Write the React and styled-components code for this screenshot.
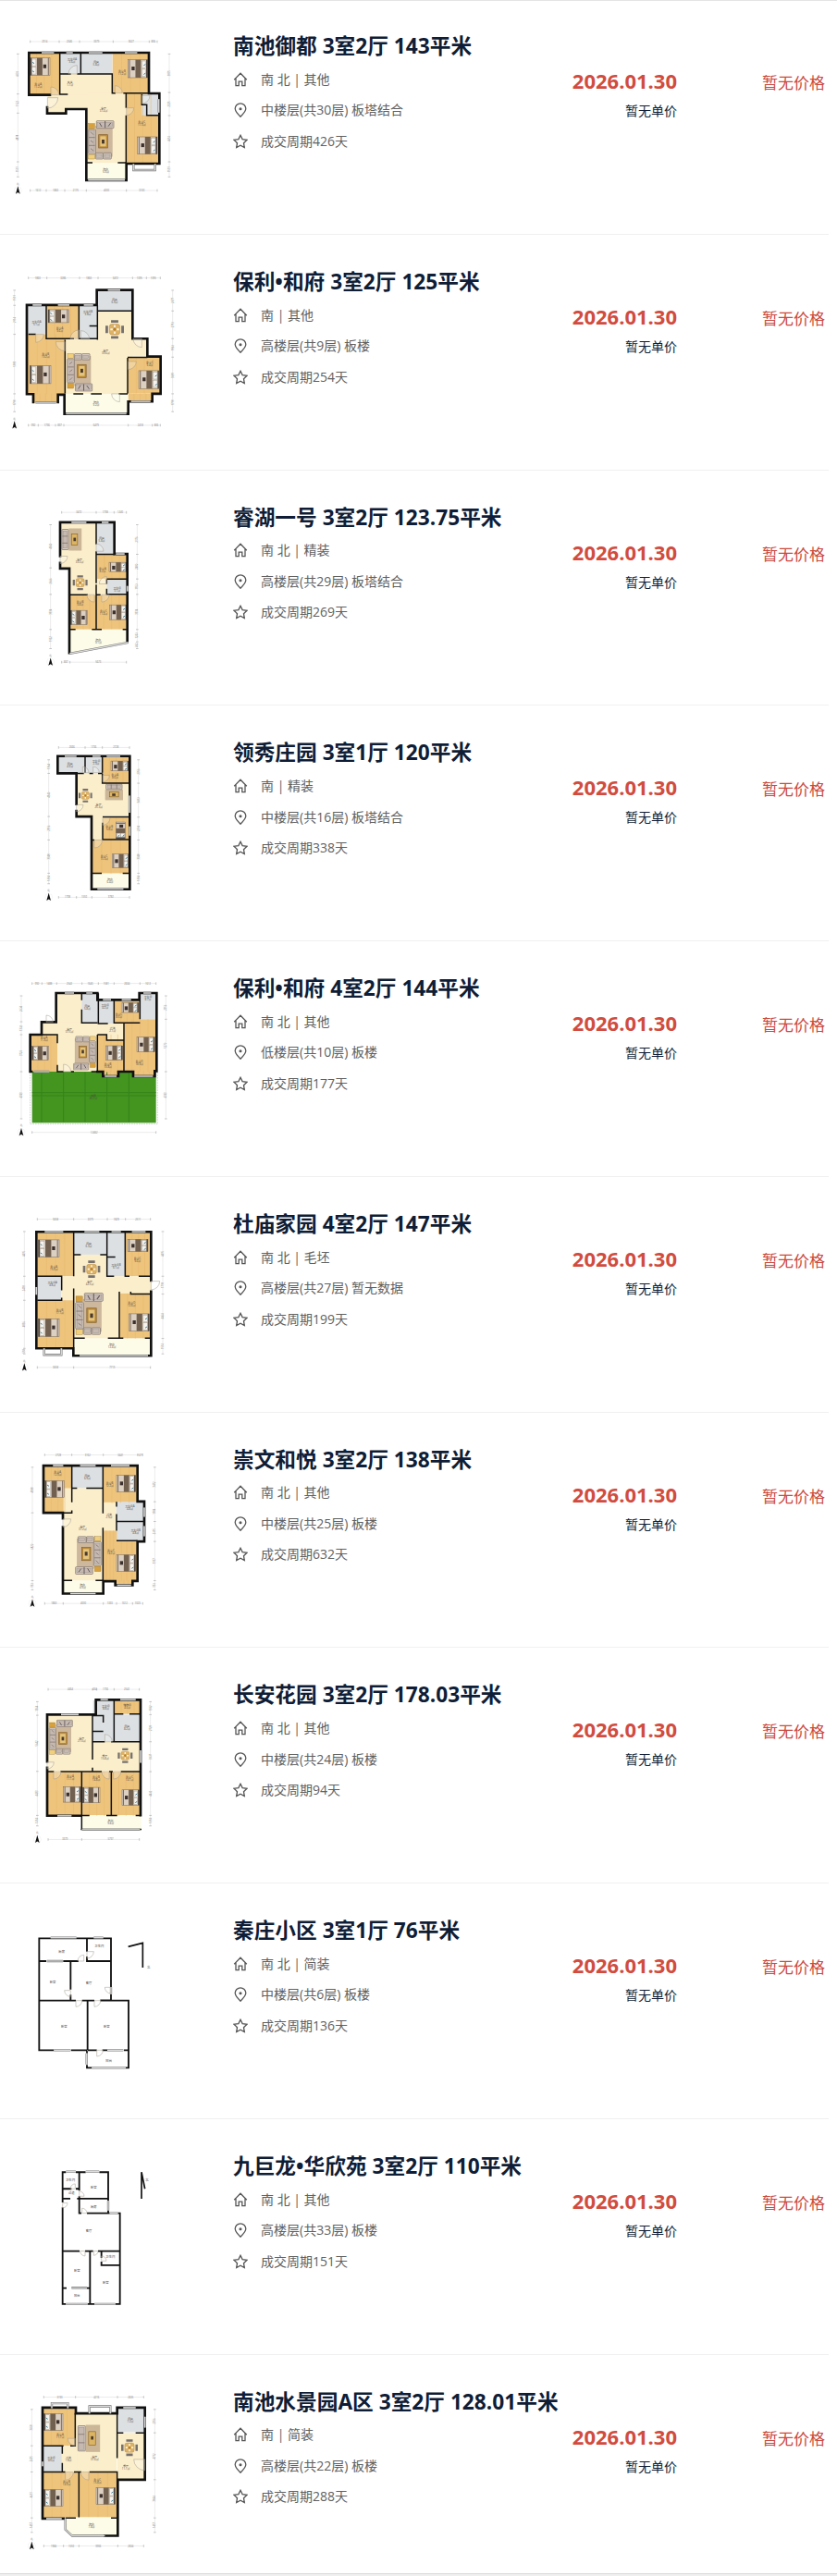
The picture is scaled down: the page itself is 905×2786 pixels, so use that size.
import React from "react"
import styled, { createGlobalStyle } from "styled-components"

const WOOD = "#eec47c"
const TILE = "#fbeecb"
const WET = "#dde0e2"
const BALCONY = "#fdfce8"

// every plan is drawn in units of a third of a pixel
// rooms: [fill, x, y, w, h]   beds: [x, y, w, h, pillow side]
// doors: [x, y, r, sx, sy]    labels: [name, area, x, y]
const plans = {
  yudu: {
    shift: 0,
    rooms: [
      [WOOD, 94, 112, 98, 136], [WET, 194, 112, 68, 68], [WET, 262, 112, 102, 68], [WOOD, 365, 112, 118, 131],
      [TILE, 194, 180, 171, 114], [TILE, 154, 248, 128, 46], [TILE, 154, 290, 61, 18], [TILE, 282, 242, 127, 228],
      [BALCONY, 282, 468, 128, 57], [WOOD, 410, 243, 106, 227], [WET, 460, 246, 56, 68],
    ],
    outer: "M162 248H94V111H483V243H517V471H410V525H280V294H214V308H153V288",
    inner: "M194 112V246H220M194 180H230M262 112V180M250 180H364V242H375M400 242H483M409 242V290M409 314V470M282 468H300M382 468H410M460 246V280H476V314H516",
    windows: "M135 111H175M215 111H236M288 111H332M405 111H445M286 524H405M515 262V305M433 472V492H503V472",
    doors: [[165, 248, 26, 1, -1], [154, 257, 34, 1, 1], [250, 180, 28, -1, -1], [373, 242, 24, 1, -1], [410, 290, 24, 1, 1], [460, 250, 26, 1, 1]],
    beds: [[98, 128, 64, 56, "l"], [415, 134, 64, 58, "r"], [446, 384, 64, 56, "r"]],
    lounges: [[284, 330, 86, 128, 1, 1]],
    labels: [["卧室A", "11.2㎡", 124, 217], ["卫生间A", "3.6㎡", 234, 136], ["厨房", "5.8㎡", 312, 144], ["卧室B", "11.2㎡", 396, 174], ["玄关", "1.7㎡", 227, 210], ["客厅", "37.4㎡", 336, 293], ["卧室C", "17.3㎡", 460, 338], ["阳台", "5.9㎡", 343, 493]],
    dims: [98, 510, 75, 558, 58, 549],
    marks: [[192, 258, 367, 484], [150, 210, 280, 410], [245, 307, 465], [240, 315, 465]],
  },
  poly: {
    shift: 15.75,
    rooms: [
      [WET, 90, 150, 60, 94], [WOOD, 150, 150, 106, 108], [WET, 256, 150, 60, 110], [WET, 316, 100, 112, 68],
      [TILE, 316, 168, 112, 270], [TILE, 212, 260, 204, 178], [TILE, 416, 258, 62, 58], [WOOD, 90, 244, 122, 194],
      [WOOD, 110, 436, 76, 30], [WOOD, 415, 318, 106, 118], [WOOD, 415, 436, 78, 26], [BALCONY, 210, 438, 206, 64],
    ],
    outer: "M108 464V438H87V149H314V100H430V258H478V316H521V437H494V462H416V502H209V440H188V464",
    inner: "M150 150V258H240M92 244H116M256 150V258H316M290 217H316M316 150V262M318 168H428M211 262V436M414 320V436M414 319H478M238 437H270M295 437H330M385 437H414",
    windows: "M106 149H135M188 149H225M272 149H302M350 100H390M115 465H182M425 462H488M214 501H410",
    doors: [[116, 244, 26, 1, 1], [211, 268, 30, -1, 1], [256, 258, 28, -1, -1], [262, 260, 28, 1, -1], [460, 258, 28, -1, 1], [416, 332, 26, 1, 1], [388, 437, 26, -1, 1]],
    beds: [[97, 346, 68, 58, "l"], [156, 164, 68, 42, "l"], [450, 362, 66, 58, "r"]],
    lounges: [[216, 305, 84, 125, 1, -1]],
    tables: [[372, 228, 30]],
    labels: [["卫生间A", "5.1㎡", 118, 207], ["卧室A", "9.6㎡", 194, 228], ["卫生间B", "3.8㎡", 285, 174], ["厨房", "6.9㎡", 372, 134], ["卧室B", "19.2㎡", 148, 311], ["客厅", "39.6㎡", 343, 300], ["卧室C", "9.4㎡", 486, 338], ["阳台", "9.2㎡", 312, 467]],
    dims: [92, 520, 61, 539, 47, 560],
    marks: [[152, 258, 318, 430, 475], [124, 180, 207, 416, 494], [150, 244, 437], [168, 258, 318, 437]],
  },
  ruihu: {
    shift: 16.5,
    rooms: [
      [TILE, 196, 90, 116, 148], [TILE, 226, 236, 86, 88], [WET, 312, 90, 60, 102], [WOOD, 314, 192, 98, 80],
      [TILE, 312, 272, 36, 52], [WET, 346, 272, 66, 50], [WOOD, 228, 324, 84, 112], [WOOD, 312, 324, 100, 112],
    ],
    floor: "M228 436H414V476L228 512Z",
    outer: "M195 198V88H371V191H413V476M195 220V238H225V512",
    inner: "M312 90V160M312 182V286M314 192H372M346 272H413M346 272V288M346 304V322H414M228 323H285M310 323H326M312 290V436M228 436H245M298 436H330M398 436H414",
    windows: "M232 88H280M330 88H352M376 191H404M413 295V312M226 514L416 478",
    doors: [[195, 198, 24, 1, 1], [312, 182, 24, 1, -1], [346, 288, 24, -1, -1], [306, 323, 24, -1, 1], [330, 323, 24, 1, 1]],
    beds: [[228, 374, 56, 46, "l"], [356, 356, 56, 48, "r"], [354, 218, 58, 30, "r"]],
    couches: [[200, 108, 66, 72, 0]],
    tables: [[260, 284, 24]],
    labels: [["客厅", "33.3㎡", 258, 212], ["厨房", "5.8㎡", 330, 141], ["卧室A", "8.2㎡", 333, 240], ["卫生间", "3.1㎡", 380, 303], ["卧室B", "9.8㎡", 260, 348], ["卧室C", "11.4㎡", 336, 378], ["阳台", "9.1㎡", 319, 472]],
    dims: [200, 410, 56, 542, 164, 445],
    marks: [[312, 370], [227], [236, 322, 436], [192, 272, 322, 436, 476]],
  },
  lingxiu: {
    shift: 17.25,
    rooms: [
      [WET, 189, 85, 88, 54], [WET, 278, 85, 54, 54], [WOOD, 333, 85, 88, 88], [TILE, 250, 139, 84, 138],
      [TILE, 333, 172, 88, 106], [TILE, 300, 276, 34, 80], [WOOD, 333, 282, 88, 72], [WOOD, 299, 356, 122, 110], [BALCONY, 299, 464, 122, 52],
    ],
    outer: "M248 240V140H187V84H421V516H297V280H248V262",
    inner: "M276 86V138M250 140H272M290 140H302M332 86V138M318 140H332M332 140V172H420M333 281H421M333 300V355H420M299 356H306M299 464H330M398 464H420",
    windows: "M210 84H248M300 84H326M346 84H390M420 212V268M421 312V342M316 515H400",
    doors: [[248, 242, 22, 1, 1], [302, 138, 20, 1, -1], [333, 146, 22, 1, 1], [333, 284, 24, 1, 1], [306, 356, 26, 1, 1], [268, 138, 20, 1, -1]],
    beds: [[364, 402, 56, 44, "r"], [360, 100, 58, 32, "r"], [376, 298, 30, 54, "b"]],
    couches: [[345, 174, 54, 58, 90]],
    tables: [[277, 212, 22]],
    labels: [["厨房", "4.9㎡", 227, 112], ["卫生间", "2.9㎡", 312, 104], ["卧室A", "8.6㎡", 373, 149], ["客厅", "25.3㎡", 320, 245], ["卧室B", "6.8㎡", 355, 316], ["卧室C", "13.3㎡", 338, 412], ["阳台", "6.4㎡", 357, 487]],
    dims: [190, 420, 56, 542, 158, 449],
    marks: [[276, 332], [248, 298], [140, 280, 356, 464], [172, 282, 356, 464]],
  },
  polyGarden: {
    shift: 18,
    rooms: [
      ["#43951f", 104, 342, 402, 166],
      [TILE, 186, 88, 80, 254], [TILE, 138, 182, 266, 40], [TILE, 186, 184, 130, 158], [WET, 265, 88, 54, 96],
      [WET, 319, 110, 52, 76], [WOOD, 370, 110, 84, 76], [WET, 454, 88, 52, 84], [WOOD, 402, 172, 104, 170], [WOOD, 430, 340, 72, 18],
      [WOOD, 316, 222, 88, 120], [WOOD, 334, 340, 50, 18], [TILE, 346, 186, 56, 54], [WOOD, 102, 222, 84, 120],
    ],
    outer: "M102 342H98V222H135V181H182V87H316V109H452V87H508V340H502V357H432V342H384V357H334V342H316",
    inner: "M265 88V110M265 140V184H316M319 88V186H350M370 110V184H454M454 90V172M402 184V342M346 220V240H402M316 222H346M316 222V342M138 222H186V250M186 320V342H206M230 342H240M296 342H316",
    windows: "M210 87H240M280 87H300M334 109H360M395 109H425M465 87H490M110 342H160M340 357H378M436 357H496",
    grid: "M135 344V506M206 344V506M276 344V506M347 344V506M418 344V506M104 410H506M104 420H506",
    doors: [[150, 181, 22, 1, -1], [206, 342, 24, 1, -1]],
    beds: [[104, 260, 54, 44, "l"], [344, 258, 54, 46, "r"], [396, 118, 54, 32, "r"], [444, 230, 58, 48, "r"]],
    lounges: [[238, 226, 74, 112, -1, -1]],
    labels: [["厨房", "5.8㎡", 283, 132], ["卫生间", "4.2㎡", 341, 130], ["卧室C", "8.5㎡", 386, 160], ["卫生间", "4.7㎡", 480, 103], ["客厅", "37.5㎡", 225, 206], ["过道", "2.1㎡", 365, 204], ["卧室A", "11.3㎡", 143, 235], ["卧室B", "10.8㎡", 350, 320], ["卧室D", "18.9㎡", 452, 312], ["花园", "86.1㎡", 303, 423]],
    dims: [104, 506, 56, 539, 69, 538],
    marks: [[136, 184, 266, 319, 370, 454], [], [180, 222, 342], [172, 342]],
  },
  dumiao: {
    shift: 18.75,
    rooms: [
      [WOOD, 121, 98, 118, 142], [WET, 240, 98, 108, 72], [WET, 348, 98, 58, 142], [WOOD, 408, 98, 82, 142],
      [TILE, 200, 240, 290, 58], [TILE, 240, 170, 108, 272], [TILE, 340, 290, 48, 152], [WET, 121, 240, 78, 78],
      [TILE, 200, 286, 40, 32], [WOOD, 121, 318, 119, 152], [WOOD, 388, 296, 102, 146], [BALCONY, 240, 442, 250, 56],
    ],
    outer: "M490 254V96H118V474H238V498H490V290",
    inner: "M239 98V240M121 240H200V286M121 318H200V310M239 280V470M240 170H262M325 170H348M347 98V240H370M348 178H374M406 98V240H420M450 240H488M387 290V442M424 290V298H488M240 441H275M350 441H400M470 441H490",
    windows: "M145 96H205M274 96H322M362 96H392M428 96H472M118 275V300M143 474V495H199V474M258 498H480",
    doors: [[490, 256, 28, 1, 1]],
    beds: [[124, 122, 68, 56, "l"], [124, 378, 68, 58, "l"], [418, 362, 66, 56, "r"], [414, 120, 66, 40, "r"]],
    lounges: [[243, 293, 92, 138, 1, 1]],
    tables: [[297, 217, 28]],
    labels: [["卧室A", "15.0㎡", 175, 211], ["厨房", "6.3㎡", 288, 137], ["卫生间B", "6.1㎡", 376, 205], ["卧室C", "9.6㎡", 446, 186], ["卫生间A", "4.8㎡", 170, 264], ["客厅", "42.5㎡", 291, 260], ["卧室B", "17.1㎡", 194, 353], ["卧室D", "12.6㎡", 427, 328], ["阳台", "12.4㎡", 363, 464]],
    dims: [121, 488, 55, 536, 79, 528],
    marks: [[239, 348, 407], [239], [240, 318, 474], [240, 298, 442]],
  },
  chongwen: {
    shift: 19.5,
    rooms: [
      [WOOD, 144, 92, 88, 148], [WET, 234, 92, 100, 70], [WOOD, 335, 92, 112, 118], [TILE, 206, 162, 128, 300],
      [TILE, 333, 208, 44, 94], [WET, 377, 206, 90, 64], [WET, 377, 272, 90, 58], [WOOD, 335, 300, 44, 162],
      [WOOD, 376, 332, 70, 132], [WOOD, 374, 460, 56, 16], [BALCONY, 206, 462, 128, 42],
    ],
    outer: "M204 260V242H141V89H446V205H468V335H446V463H430V477H374V464H335V504H204V288",
    inner: "M233 90V208M233 234V242H206M234 162H250M280 162H334M334 92V244M334 290V462M378 206V222M378 246V300M378 270H466M378 332H446M206 461H234M310 461H334",
    windows: "M172 89H205M260 89H310M360 89H420M468 225V255M468 285V318M228 504H310M380 477H425",
    doors: [[204, 262, 26, 1, 1]],
    beds: [[146, 138, 62, 54, "l"], [378, 120, 62, 54, "r"], [378, 378, 62, 54, "r"]],
    lounges: [[244, 317, 86, 126, -1, -1]],
    labels: [["卧室A", "12.9㎡", 187, 113], ["厨房", "6.9㎡", 283, 124], ["卧室B", "12.2㎡", 356, 147], ["过道", "2.9㎡", 354, 249], ["卫生间A", "4.8㎡", 421, 222], ["卫生间B", "4.8㎡", 440, 302], ["客厅", "37.2㎡", 268, 290], ["卧室C", "14.2㎡", 360, 366], ["阳台", "4.9㎡", 268, 477]],
    dims: [145, 463, 54, 536, 105, 502],
    marks: [[233, 335, 446], [205, 335, 378, 430], [242, 462], [206, 270, 335, 462]],
  },
  changan: {
    shift: 20.25,
    rooms: [
      [TILE, 156, 138, 144, 180], [WET, 302, 88, 70, 134], [WOOD, 372, 88, 84, 44], [WET, 372, 134, 84, 88],
      [TILE, 300, 222, 156, 96], [WOOD, 156, 320, 110, 142], [WOOD, 266, 320, 96, 142], [WOOD, 362, 320, 94, 142], [BALCONY, 264, 460, 194, 48],
    ],
    outer: "M153 286V134H311V86H456V460M153 306V462H262",
    inner: "M300 136V280M300 306V318M302 137H335V160M302 188H335M370 88V222M300 222H340M360 222H456M372 132H400M420 132H456M156 319H175M196 319H330M354 319H366M392 319H456M265 320V508M361 320V460M266 461H290M345 461H380M440 461H456M262 506H268M452 506H459",
    windows: "M198 134H255M326 86H350M390 86H440M456 250V290M186 462H232M266 507H454",
    doors: [[153, 288, 22, 1, 1], [340, 222, 24, 1, -1], [174, 319, 24, 1, 1], [354, 319, 24, -1, 1], [368, 319, 24, 1, 1]],
    beds: [[206, 368, 56, 50, "r"], [268, 370, 56, 50, "l"], [396, 378, 56, 50, "r"]],
    lounges: [[158, 150, 78, 114, 1, 1]],
    tables: [[406, 267, 24]],
    labels: [["客厅", "27.0㎡", 265, 215], ["卫生间", "8.8㎡", 343, 109], ["储物间", "4.0㎡", 413, 107], ["厨房", "8.2㎡", 412, 175], ["餐厅", "15.8㎡", 340, 271], ["卧室A", "17.1㎡", 228, 338], ["卧室B", "14.8㎡", 312, 341], ["卧室C", "14.1㎡", 420, 341], ["阳台", "9.4㎡", 359, 481]],
    dims: [156, 452, 52, 539, 121, 488],
    marks: [[300, 314, 370], [265], [136, 318, 461], [134, 222, 319, 461]],
  },
  qinzhuang: {
    shift: 36,
    rooms: [],
    outer: "",
    inner: "M162 79H127V442H175M230 442H282M127 79H282V122M248 79H360V238M360 260V280H325M282 138V153H360M127 153H150M205 153H255M229 153V245M229 262V281M127 281H246M266 281H306M284 281V442M325 281H417V499H408M284 442H314M332 442H348M402 442H417M282 445V452M282 490V499H298",
    windows: "M164 77H248M304 77H335M152 153H204M175 442H228M281 452V488M298 499H408M348 442H400M360 238V260",
    doors: [[282, 122, 22, 1, 1], [272, 153, 20, -1, -1], [229, 248, 20, -1, 1], [246, 281, 20, 1, 1], [306, 281, 20, 1, 1], [360, 238, 20, -1, 1], [314, 442, 20, 1, 1]],
    labels: [["厨房", "", 200, 127], ["卫生间", "", 322, 109], ["卧室", "", 171, 226], ["客厅", "", 288, 229], ["卧室", "", 208, 370], ["卧室", "", 346, 370], ["阳台", "", 353, 481], ["北", "", 482, 176]],
    north: "M416 106L463 94V174",
  },
  jiujulong: {
    shift: 36.75,
    rooms: [],
    outer: "",
    inner: "M214 72H203V170M203 186V500H214M246 72H278M257 72V132M322 72H351V165M203 126H232M246 126H257M203 158H228M250 158H351M257 150V205H264M282 205H356M351 196V205M382 205H389V328M203 328H258M276 328H302M318 328H389V374H329V362M329 328V350M292 328V500M203 448H216M282 448H292M284 500H306M374 500H389V374",
    windows: "M214 70H246M278 70H322M351 165V196M356 205H382M214 500H284M306 500H374M232 447H282",
    doors: [[203, 172, 16, 1, 1], [244, 126, 16, -1, -1], [257, 150, 16, 1, -1], [266, 205, 16, 1, -1], [276, 328, 16, -1, 1], [304, 328, 14, 1, 1], [329, 360, 16, 1, -1]],
    labels: [["卫生间", "", 228, 102], ["过道", "", 232, 144], ["卧室", "", 304, 126], ["厨房", "", 304, 188], ["客厅", "", 288, 266], ["卫生间", "", 358, 350], ["卧室", "", 250, 396], ["卧室", "", 343, 434], ["阳台", "", 250, 477], ["北", "", 477, 101]],
    north: "M459 158V72L470 126",
  },
  shuijing: {
    shift: 7.5,
    rooms: [
      [WOOD, 140, 102, 104, 122], [TILE, 246, 116, 132, 196], [WET, 382, 102, 88, 78], [TILE, 380, 182, 88, 150],
      [WET, 140, 224, 62, 84], [TILE, 200, 224, 50, 86], [WOOD, 140, 310, 116, 146], [WOOD, 256, 310, 124, 146],
    ],
    floor: "M212 456H382V516H234L212 496Z",
    outer: "M246 100H138V460H206M246 100V119H380V100H470V334H382V516H340",
    inner: "M244 118V224H228M140 224H206M202 224V250M202 280V308M140 309H212M240 309H264M290 309H380V456M380 120V264M382 182H400M440 182H468M256 310V456M212 458H246M360 458H380",
    windows: "M168 102V86H220V102M290 119V96H358V119M400 100H440M470 130V165M138 275V290M150 460H200M212 460V496L234 516H340",
    doors: [[470, 268, 36, -1, 1], [212, 309, 26, 1, 1], [288, 309, 26, -1, 1], [244, 200, 24, -1, 1]],
    beds: [[142, 120, 62, 54, "l"], [142, 366, 62, 54, "l"], [312, 360, 62, 54, "r"]],
    couches: [[252, 156, 74, 88, 0]],
    tables: [[420, 230, 27]],
    labels: [["卧室A", "11.7㎡", 195, 190], ["厨房", "7.2㎡", 423, 138], ["卫生间", "4.6㎡", 166, 266], ["过道", "1.8㎡", 222, 266], ["客厅", "31.6㎡", 307, 262], ["餐厅", "11.1㎡", 408, 291], ["卧室B", "14.9㎡", 216, 344], ["卧室C", "15.4㎡", 316, 336], ["阳台", "7.8㎡", 297, 482]],
    dims: [142, 466, 66, 549, 103, 502],
    marks: [[245, 381], [206, 256, 382], [224, 309, 458], [182, 334, 458]],
  },
}

const houses = [
  { name: "南池御都 3室2厅 143平米", facing: "南 北 | 其他", floor: "中楼层(共30层) 板塔结合", days: 426, plan: "yudu" },
  { name: "保利•和府 3室2厅 125平米", facing: "南 | 其他", floor: "高楼层(共9层) 板楼", days: 254, plan: "poly" },
  { name: "睿湖一号 3室2厅 123.75平米", facing: "南 北 | 精装", floor: "高楼层(共29层) 板塔结合", days: 269, plan: "ruihu" },
  { name: "领秀庄园 3室1厅 120平米", facing: "南 | 精装", floor: "中楼层(共16层) 板塔结合", days: 338, plan: "lingxiu" },
  { name: "保利•和府 4室2厅 144平米", facing: "南 北 | 其他", floor: "低楼层(共10层) 板楼", days: 177, plan: "polyGarden" },
  { name: "杜庙家园 4室2厅 147平米", facing: "南 北 | 毛坯", floor: "高楼层(共27层) 暂无数据", days: 199, plan: "dumiao" },
  { name: "崇文和悦 3室2厅 138平米", facing: "南 北 | 其他", floor: "中楼层(共25层) 板楼", days: 632, plan: "chongwen" },
  { name: "长安花园 3室2厅 178.03平米", facing: "南 北 | 其他", floor: "中楼层(共24层) 板楼", days: 94, plan: "changan" },
  { name: "秦庄小区 3室1厅 76平米", facing: "南 北 | 简装", floor: "中楼层(共6层) 板楼", days: 136, plan: "qinzhuang" },
  { name: "九巨龙•华欣苑 3室2厅 110平米", facing: "南 北 | 其他", floor: "高楼层(共33层) 板楼", days: 151, plan: "jiujulong" },
  { name: "南池水景园A区 3室2厅 128.01平米", facing: "南 | 简装", floor: "高楼层(共22层) 板楼", days: 288, plan: "shuijing" },
]

const Bed = ({ x, y, w, h, side }) => {
  const turn = { l: "", r: `translate(${w} 0) scale(-1 1)`, b: `translate(0 ${h}) rotate(-90)` }[side]
  const bw = side === "b" ? h : w
  const bh = side === "b" ? w : h
  return (
    <g transform={`translate(${x} ${y}) ${turn}`}>
      <rect width={bw} height={bh} fill="#dcd0c2" stroke="#75675b" strokeWidth="1.5" />
      <rect width="5" height={bh} fill="#554b44" />
      <rect x="6" y="4" width={bw * 0.2} height={bh * 0.4} fill="#f6f3ee" stroke="#8d8881" />
      <rect x="6" y={bh * 0.53} width={bw * 0.2} height={bh * 0.4} fill="#f6f3ee" stroke="#8d8881" />
      <path d={`M7 ${bh * 0.25}l6 4M7 ${bh * 0.75}l6 4`} stroke="#4b8396" strokeWidth="3" />
      <rect x={bw * 0.34} width={bw * 0.28} height={bh} fill="#71604f" />
      <path d={`M${bw * 0.92} 0V${bh}`} stroke="#7c6a5c" strokeWidth="3" />
      <rect x={bw * 0.66} y={bh * 0.38} width="10" height="12" fill="#3b302d" />
    </g>
  )
}

const Seat = ({ x, y, w, h }) => (
  <g>
    <rect x={x} y={y} width={w} height={h} rx="2" fill="#d9cec4" stroke="#776b66" strokeWidth="2" />
    <rect x={x + 4} y={y + 5} width={w - 8} height={h - 10} fill="#c5b9b1" stroke="#8b807a" />
  </g>
)

const Lounge = ({ x, y, w, h, fx, fy }) => (
  <g transform={`translate(${fx < 0 ? x + w : x} ${fy < 0 ? y + h : y}) scale(${(w / 86) * fx} ${(h / 128) * fy})`}>
    <rect x="26" y="20" width="54" height="98" fill="#cdb79d" stroke="#b6a086" />
    <rect x="36" y="47" width="29" height="43" fill="#bc8a37" stroke="#83602a" strokeWidth="2" />
    <rect x="41" y="52" width="19" height="33" fill="#e5c57e" />
    <rect x="46" y="63" width="9" height="13" fill="#4a3a2d" />
    <rect x="3" y="11" width="20" height="17" fill="#d8a13e" stroke="#866222" />
    <rect x="3" y="111" width="20" height="15" fill="#f1cf7b" stroke="#866222" />
    <Seat x={2} y={30} w={24} h={79} />
    <path d="M4 56H24M4 82H24M10 38l9 9M10 66l9 7M10 92l9 7" stroke="#74655f" strokeWidth="2" />
    <Seat x={29} y={2} w={56} h={24} />
    <path d="M57 3V25M39 9l7 12M67 20l8-11" stroke="#655a5e" strokeWidth="3" />
    <Seat x={26} y={106} w={24} h={20} />
    <Seat x={51} y={106} w={26} h={20} />
  </g>
)

const Couch = ({ x, y, w, h, angle }) => (
  <g transform={`translate(${x} ${y}) ${angle ? `translate(${w} 0) rotate(90)` : ""}`}>
    <rect x={w * 0.35} width={w * 0.63} height={h} fill="#cbb698" />
    <Seat x={1} y={3} w={w * 0.32} h={h - 6} />
    <path d={`M2 ${h * 0.35}H${w * 0.3}M2 ${h * 0.66}H${w * 0.3}`} stroke="#74655f" strokeWidth="2" />
    <rect x={w * 0.48} y={h * 0.25} width={w * 0.3} height={h * 0.5} fill="#dbb464" stroke="#8b6528" strokeWidth="2" />
    <rect x={w * 0.58} y={h * 0.42} width="8" height="11" fill="#4a3a2d" />
  </g>
)

const Table = ({ x, y, r }) => (
  <g transform={`translate(${x} ${y}) scale(${r / 28})`}>
    <path d="M-11-24H11M-11 24H11M-24-11V11M24-11V11" stroke="#77716e" strokeWidth="8" />
    <rect x="-16" y="-16" width="32" height="32" rx="8" fill="#deb264" stroke="#9c712e" />
    <path d="M-13 0h7M6 0h7M0-13v7M0 6v7" stroke="#faf4e6" strokeWidth="5" />
    <circle r="4" fill="#b57b27" />
  </g>
)

const Dimensions = ({ dims, marks }) => {
  const [left, right, top, bottom, west, east] = dims
  const yStart = top + 40
  const yEnd = bottom - 44
  const lines = [
    { at: top, stops: [left, ...marks[0], right] },
    { at: bottom, stops: [left, ...marks[1], right] },
    { at: west, stops: [yStart, ...marks[2], yEnd], upright: true },
    { at: east, stops: [yStart, ...marks[3], yEnd], upright: true },
  ]
  return (
    <g>
      {lines.map(({ at, stops, upright }, i) => (
        <g key={i}>
          <path d={upright ? `M${at} ${stops[0]}V${stops[stops.length - 1]}` : `M${stops[0]} ${at}H${stops[stops.length - 1]}`} stroke="#d6d6d6" strokeWidth="1.5" />
          {stops.map(s => (
            <path key={s} d={upright ? `M${at - 4} ${s}h8` : `M${s} ${at - 4}v8`} stroke="#aaa" strokeWidth="2" />
          ))}
          {stops.slice(1).map((s, n) => {
            const mid = (s + stops[n]) / 2
            const length = Math.round((s - stops[n]) * 31)
            return upright
              ? <DimText key={s} x="0" y="3" transform={`translate(${at} ${mid}) rotate(-90)`}>{length}</DimText>
              : <DimText key={s} x={mid} y={at + 3}>{length}</DimText>
          })}
        </g>
      ))}
      <circle cx={west} cy={bottom} r="12" fill="none" stroke="#e3e3e3" />
      <path d={`M${west} ${bottom - 14}l7 25l-7-5l-7 5z`} fill="#111" />
      <DimText x={west} y={bottom - 19}>北</DimText>
    </g>
  )
}

const FloorPlan = ({ plan }) => {
  const { shift, rooms, floor, outer, inner, windows, grid, doors = [], beds = [], lounges = [], couches = [], tables = [], labels, dims, marks, north } = plan
  return (
    <PlanImage viewBox={`0 ${-shift} 630 600`}>
      {rooms.map(([fill, x, y, w, h], i) => <rect key={i} x={x} y={y} width={w} height={h} fill={fill} />)}
      {rooms.filter(room => room[0] === WOOD).map(([, x, y, w, h], i) => (
        <path key={i} d={`M${x + w * 0.25} ${y}v${h}M${x + w * 0.5} ${y}v${h}M${x + w * 0.75} ${y}v${h}`} stroke="#e4b76a" strokeWidth="1.5" />
      ))}
      {grid && (
        <g fill="none">
          <path d={grid} stroke="#35831a" strokeWidth="3" />
          <path d="M98 344V512H511V344" stroke="#bbb" strokeWidth="2" strokeDasharray="5 3" />
        </g>
      )}
      {floor && <path d={floor} fill={BALCONY} />}
      {lounges.map(([x, y, w, h, fx, fy]) => <Lounge key={x} x={x} y={y} w={w} h={h} fx={fx} fy={fy} />)}
      {couches.map(([x, y, w, h, angle]) => <Couch key={x} x={x} y={y} w={w} h={h} angle={angle} />)}
      {tables.map(([x, y, r]) => <Table key={x} x={x} y={y} r={r} />)}
      {beds.map(([x, y, w, h, side], i) => <Bed key={i} x={x} y={y} w={w} h={h} side={side} />)}
      <path d={outer} fill="none" stroke="#111" strokeWidth="8" strokeLinecap="square" />
      <path d={inner} fill="none" stroke="#111" strokeWidth={outer ? 4.5 : 5.5} />
      <path d={windows} fill="none" stroke="#777" strokeWidth="7" />
      <path d={windows} fill="none" stroke="#ddd" strokeWidth="3.5" />
      {doors.map(([x, y, r, sx, sy], i) => (
        <path key={i} d={`M${x} ${y + sy * r}V${y}h${sx * r}A${r} ${r} 0 0 ${sx * sy > 0 ? 1 : 0} ${x} ${y + sy * r}`} fill="#fff" fillOpacity="0.25" stroke="#a39b8c" strokeWidth="1.5" />
      ))}
      {labels.map(([name, area, x, y], i) => (
        <g key={i}>
          <RoomText x={x} y={y} $large={!area}>{name}</RoomText>
          {area && <RoomText x={x} y={y + 9}>{area}</RoomText>}
        </g>
      ))}
      {dims && <Dimensions dims={dims} marks={marks} />}
      {north && <path d={north} fill="none" stroke="#111" strokeWidth="5" />}
    </PlanImage>
  )
}

const HouseIcon = () => (
  <Icon viewBox="0 0 16 16">
    <path d="M1.2 8.2L8 1.3l6.8 6.9M3 6.6v8h3.2v-4.4h3.6v4.4H13v-8" />
  </Icon>
)

const PinIcon = () => (
  <Icon viewBox="0 0 16 16">
    <path d="M8 15.2C4.6 11.9 2.2 9.4 2.2 6.6a5.8 5.8 0 0 1 11.6 0c0 2.8-2.4 5.3-5.8 8.6z" />
    <circle cx="8" cy="6.8" r="0.9" fill="#555" />
  </Icon>
)

const StarIcon = () => (
  <Icon viewBox="0 0 16 16">
    <path d="M8 1.3l2.1 4.3 4.9.7-3.5 3.4.8 4.9L8 12.3l-4.3 2.3.8-4.9L1 6.3l4.9-.7z" />
  </Icon>
)

const App = () => {
  return (
    <Page>
      <GlobalStyle />
      <List>
        {houses.map(house => (
          <Row key={house.plan}>
            <FloorPlan plan={plans[house.plan]} />
            <Info>
              <Title>{house.name}</Title>
              <Detail><HouseIcon />{house.facing}</Detail>
              <Detail><PinIcon />{house.floor}</Detail>
              <Detail><StarIcon />成交周期{house.days}天</Detail>
            </Info>
            <Deal>
              <DealDate>2026.01.30</DealDate>
              <UnitPrice>暂无单价</UnitPrice>
            </Deal>
            <Price>暂无价格</Price>
          </Row>
        ))}
      </List>
    </Page>
  )
}

export default App


const GlobalStyle = createGlobalStyle`
  * {
    box-sizing: border-box;
  }

  body {
    margin: 0;
    background: #f0f0f0;
    font-family: "Open Sans", "Noto Sans CJK SC", sans-serif;
  }

  h3, p {
    margin: 0;
  }
`

const Page = styled.main`
  height: 2786px;
  overflow: hidden;
  border-top: 1px solid #e4e4e4;
`

const List = styled.div`
  height: 2783px;
  overflow: hidden;
  background: #fff;
  border-bottom: 1px solid #d9d9d9;
`

const Row = styled.section`
  display: flex;
  align-items: flex-start;
  width: 896px;
  height: 254.75px;
  padding-right: 4px;
  border-bottom: 1px solid #f0f0f0;

  &:first-child {
    margin-top: -2px;
  }
`

const PlanImage = styled.svg`
  flex: none;
  width: 210px;
  height: 200px;
  margin-top: 21px;
`

const RoomText = styled.text`
  font-size: ${props => props.$large ? '10px' : '8.5px'};
  fill: #4c463f;
  text-anchor: middle;
`

const DimText = styled.text`
  font-size: 8px;
  fill: #777;
  text-anchor: middle;
`

const Info = styled.div`
  flex: 1;
  min-width: 0;
  padding-top: 34px;
  padding-left: 42px;
  white-space: nowrap;
`

const Title = styled.h3`
  height: 36px;
  color: #0f1d36;
  font-size: 22.7px;
  font-weight: 700;
  line-height: 34px;
`

const Detail = styled.p`
  display: flex;
  align-items: center;
  height: 33.5px;
  color: #616161;
  font-size: 14px;
  line-height: 20px;
`

const Icon = styled.svg`
  width: 16px;
  height: 16px;
  margin-right: 14px;
  fill: none;
  stroke: #555;
  stroke-width: 1.3;
`

const Deal = styled.div`
  flex: none;
  width: 160px;
  padding-top: 72px;
  text-align: right;
`

const DealDate = styled.p`
  color: #d14c3f;
  font-size: 22px;
  font-weight: 700;
  line-height: 32px;
`

const UnitPrice = styled.p`
  color: #0f1d36;
  font-size: 14px;
  line-height: 33px;
`

const Price = styled.p`
  flex: none;
  width: 160px;
  padding-top: 78px;
  color: #cb4a3e;
  font-size: 17px;
  line-height: 26px;
  text-align: right;
`
